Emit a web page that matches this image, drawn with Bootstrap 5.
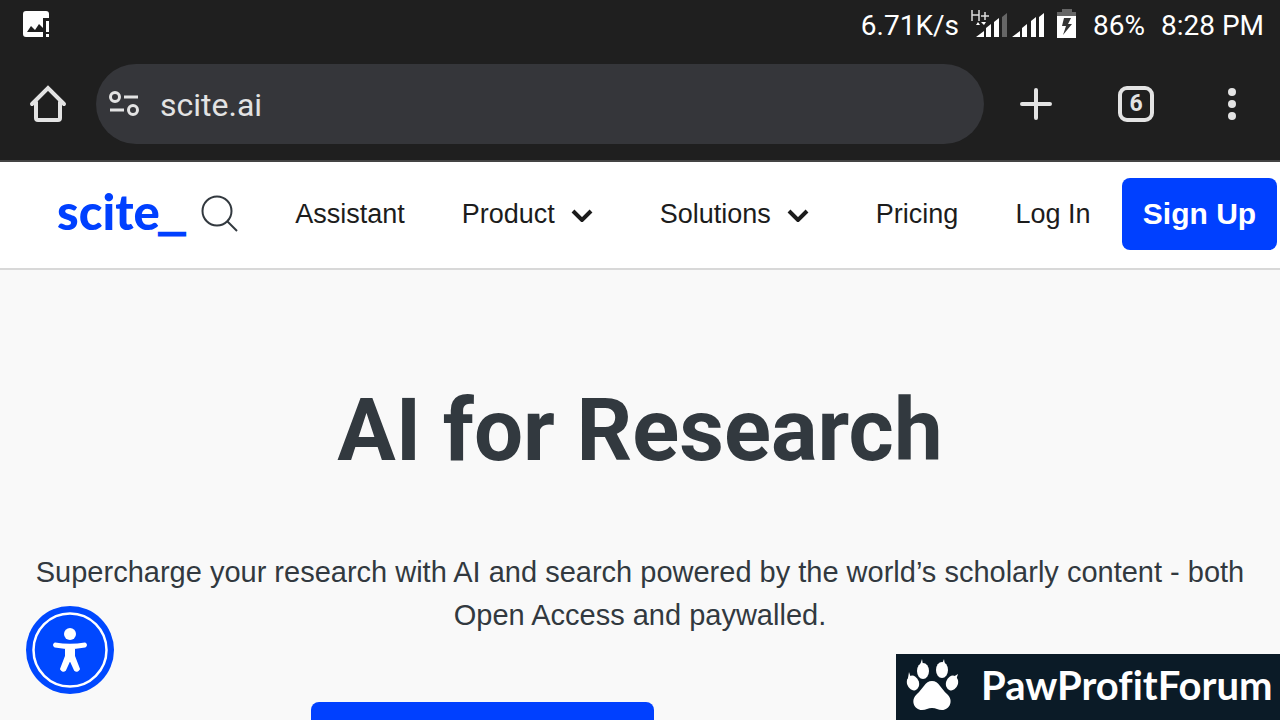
<!DOCTYPE html>
<html lang="en">
<head>
<meta charset="utf-8">
<meta name="viewport" content="width=device-width, initial-scale=1">
<title>scite.ai – AI for Research</title>
<link href="https://cdn.jsdelivr.net/npm/bootstrap@5.3.0/dist/css/bootstrap.min.css" rel="stylesheet">
<style>
  :root { --brand: #0040ff; --chrome: #1f1f1f; --ink: #32393f; }
  body { font-family: "Liberation Sans", Arial, sans-serif; background: #f9f9f9; color: var(--ink); }
  svg { display: block; flex: none; }
  .status-bar, .browser-bar { background: var(--chrome); font-family: Roboto, sans-serif; }
  .status-bar { height: 48px; padding: 0 16px 0 22px; font-size: 28px; line-height: 48px; color: #fff; }
  .status-info { padding-top: 4px; }
  .battery { margin: 0 16px 4px 12px; }
  .browser-bar { height: 114px; padding: 0 36px 0 28px; gap: 28px; border-bottom: 2px solid #444; color: #e3e3e3; }
  .address { height: 80px; border-radius: 40px; background: #35363a; padding: 0 12px; gap: 18px; }
  .address input { background: none; border: 0; outline: 0; color: #e3e3e3; font-size: 32px; line-height: 40px; min-width: 0; padding: 2px 0 0; }
  .plain-btn { background: none; border: 0; padding: 0; color: inherit; }
  .browser-actions { gap: 66px; padding-left: 8px; }
  .tab-count { width: 36px; height: 36px; border: 4px solid #e3e3e3; border-radius: 9px; font-size: 23px; font-weight: 700; line-height: 28px; }
  .site-nav { height: 108px; background: #fff; border-bottom: 2px solid #d8d8d8; padding: 0 3px 2px 57px; }
  .site-nav a, .site-nav .menu-btn { color: #1c1c1c; font-size: 27px; line-height: 36px; text-decoration: none; white-space: nowrap; }
  .site-nav .logo { color: var(--brand); font-family: Lato, sans-serif; font-weight: 900; font-size: 49px; line-height: 50px; padding-bottom: 6px; }
  .logo span { font-family: "Liberation Sans", sans-serif; font-weight: 700; font-size: 44px; line-height: 44px; -webkit-text-stroke: 3px var(--brand); }
  .nav-items { gap: 57px; margin-left: 57px; }
  .menu-btn { margin-right: 8px; }
  .site-nav .signup { width: 155px; height: 72px; border-radius: 8px; background: var(--brand); color: #fff; font-weight: 700; font-size: 30px; line-height: 72px; text-align: center; }
  .hero { padding: 108px 32px 0; min-height: 0; overflow: hidden; }
  .hero h1 { font-family: Roboto, sans-serif; font-size: 87px; line-height: 104px; font-weight: 700; margin: 0 0 69px; }
  .hero p { font-size: 29px; line-height: 43px; margin: 0 0 65px; }
  .hero-actions { max-width: 658px; }
  .cta { width: 343px; height: 72px; border: 0; border-radius: 8px; background: var(--brand); }
  .a11y { left: 26px; bottom: 26px; }
  .sponsor { right: 0; bottom: 0; width: 384px; height: 66px; background: #0b1b27; color: #fff; font-family: Lato, sans-serif; font-weight: 700; font-size: 40px; font-variant-ligatures: none; line-height: 60px; padding: 0 0 4px 10px; gap: 22px; }
</style>
</head>
<body class="vh-100 overflow-hidden d-flex flex-column">

<div class="status-bar d-flex align-items-center justify-content-between flex-shrink-0">
  <svg width="28" height="28" viewBox="0 0 28 28"><path fill="#fff" d="M4 1H24Q27 1 27 4V8H21V27H4Q1 27 1 24V4Q1 1 4 1ZM5 22H21V18L17 14L13 20L9 16Z" fill-rule="evenodd"/><path fill="#fff" d="M24 11h3v11h-3zM24 24h3v3h-3z"/></svg>
  <div class="status-info d-flex align-items-center">
    <span>6.71K/s</span>
    <svg class="ms-2" width="78" height="32" viewBox="0 0 78 32"><g fill="none" stroke="#ddd" stroke-width="1.5"><path d="M5 0v11M12 0v11M5 5h7M14 6h8M18 2v8"/></g><path fill="#fff" d="M9 15l2-3 2 3zM14 12h5l-2 3zM9 27l8-6v6zM19 18l5-4v13h-5zM27 12l5-4v19h-5zM45 27l8-6v6zM55 18l5-4v13h-5zM64 11l5-4v20h-5zM72 7l5-4v24h-5z"/><path fill="#666" d="M35 7l5-4v24h-5z"/></svg>
    <svg class="battery" width="20" height="30" viewBox="0 0 20 30"><path fill="#666" d="M5 0h10v3h4v4H0V3h5z"/><path fill="#fff" d="M0 7h19v22H0z"/><path fill="#333" d="M7 9h7l-3 6h4L6 26l3-9H5z"/></svg>
    <span>86%</span>
    <span class="ms-3">8:28 PM</span>
  </div>
</div>

<div class="browser-bar d-flex align-items-center flex-shrink-0">
  <button class="plain-btn" aria-label="Home"><svg width="40" height="40" viewBox="0 0 40 40" fill="none" stroke="#e3e3e3" stroke-width="4" stroke-linecap="round" stroke-linejoin="miter"><path d="M4 20L20 4l16 16M8 18v16q0 2 2 2h20q2 0 2-2V18"/></svg></button>
  <div class="address d-flex align-items-center flex-grow-1">
    <svg width="34" height="28" viewBox="0 0 34 28" fill="none" stroke="#e3e3e3" stroke-width="3"><circle cx="7" cy="7" r="4.5"/><path d="M16 7h14M2 20h14"/><circle cx="25" cy="20" r="4.5"/></svg>
    <input class="flex-grow-1" type="text" value="scite.ai" aria-label="Address">
  </div>
  <div class="browser-actions d-flex align-items-center">
    <button class="plain-btn" aria-label="New tab"><svg width="32" height="32" viewBox="0 0 32 32" stroke="#e3e3e3" stroke-width="4" stroke-linecap="round"><path d="M16 2v28M2 16h28"/></svg></button>
    <button class="plain-btn tab-count" aria-label="6 open tabs">6</button>
    <button class="plain-btn" aria-label="Menu"><svg width="24" height="36" viewBox="0 0 24 36" fill="#e3e3e3"><circle cx="12" cy="6" r="4"/><circle cx="12" cy="18" r="4"/><circle cx="12" cy="30" r="4"/></svg></button>
  </div>
</div>

<nav class="site-nav d-flex align-items-center flex-shrink-0">
  <div class="d-flex align-items-center gap-3">
    <a class="logo" href="#">scite<span>_</span></a>
    <button class="plain-btn" aria-label="Search"><svg width="38" height="38" viewBox="0 0 38 38" fill="none" stroke="#32393f" stroke-width="2"><circle cx="17" cy="16" r="14.5"/><path d="M27 26l10 10"/></svg></button>
  </div>
  <div class="nav-items d-flex align-items-center">
    <a href="#">Assistant</a>
    <button class="plain-btn menu-btn d-flex align-items-center">Product <svg class="ms-3" width="24" height="16" viewBox="0 0 24 16" fill="none" stroke="#1c1c1c" stroke-width="4"><path d="M2 5l9 9 9-9"/></svg></button>
    <button class="plain-btn menu-btn d-flex align-items-center">Solutions <svg class="ms-3" width="24" height="16" viewBox="0 0 24 16" fill="none" stroke="#1c1c1c" stroke-width="4"><path d="M2 5l9 9 9-9"/></svg></button>
    <a href="#">Pricing</a>
    <a href="#">Log In</a>
  </div>
  <a class="signup ms-auto" href="#">Sign Up</a>
</nav>

<main class="hero text-center flex-grow-1">
  <h1>AI for Research</h1>
  <p>Supercharge your research with AI and search powered by the world’s scholarly content - both Open Access and paywalled.</p>
  <div class="hero-actions mx-auto text-start"><button class="cta" aria-label="Get started"></button></div>
</main>

<button class="plain-btn a11y position-fixed" aria-label="Accessibility"><svg width="88" height="88" viewBox="0 0 88 88"><circle cx="44" cy="44" r="44" fill="#0048ff"/><circle cx="44" cy="44" r="36.5" fill="none" stroke="#fff" stroke-width="2.5"/><circle cx="44" cy="28" r="6" fill="#fff"/><path fill="#fff" stroke="#fff" stroke-width="2" stroke-linejoin="round" d="M29 37.500Q44 40 59 37.500Q61 39 59 40.500L48 42V50L53 63Q51 66 49 64L44 53L39 64Q37 66 35 63L40 50V42L29 40.500Q27 39 29 37.500Z"/></svg></button>

<aside class="sponsor position-fixed d-flex align-items-center">
  <svg width="53" height="52" viewBox="0 0 53 52" fill="#fff"><path d="M26 22c7 0 9 8 15 13 7 6 3 16-5 16-4 0-6-2-10-2s-6 2-10 2c-8 0-12-10-5-16 6-5 8-13 15-13z"/><ellipse cx="17" cy="12" rx="6" ry="8"/><ellipse cx="36" cy="11" rx="6" ry="8"/><ellipse cx="7" cy="24" rx="6" ry="7.500" transform="rotate(-18 7 24)"/><ellipse cx="46" cy="24" rx="6" ry="7.500" transform="rotate(18 46 24)"/><path d="M14 6l2-6 1 6zM36 5l2-5 1 6zM2 19l1-6 2 6zM47 18l5-3-2 6z"/></svg>
  <span>PawProfitForum</span>
</aside>

<script src="https://cdn.jsdelivr.net/npm/bootstrap@5.3.0/dist/js/bootstrap.bundle.min.js"></script>
</body>
</html>
